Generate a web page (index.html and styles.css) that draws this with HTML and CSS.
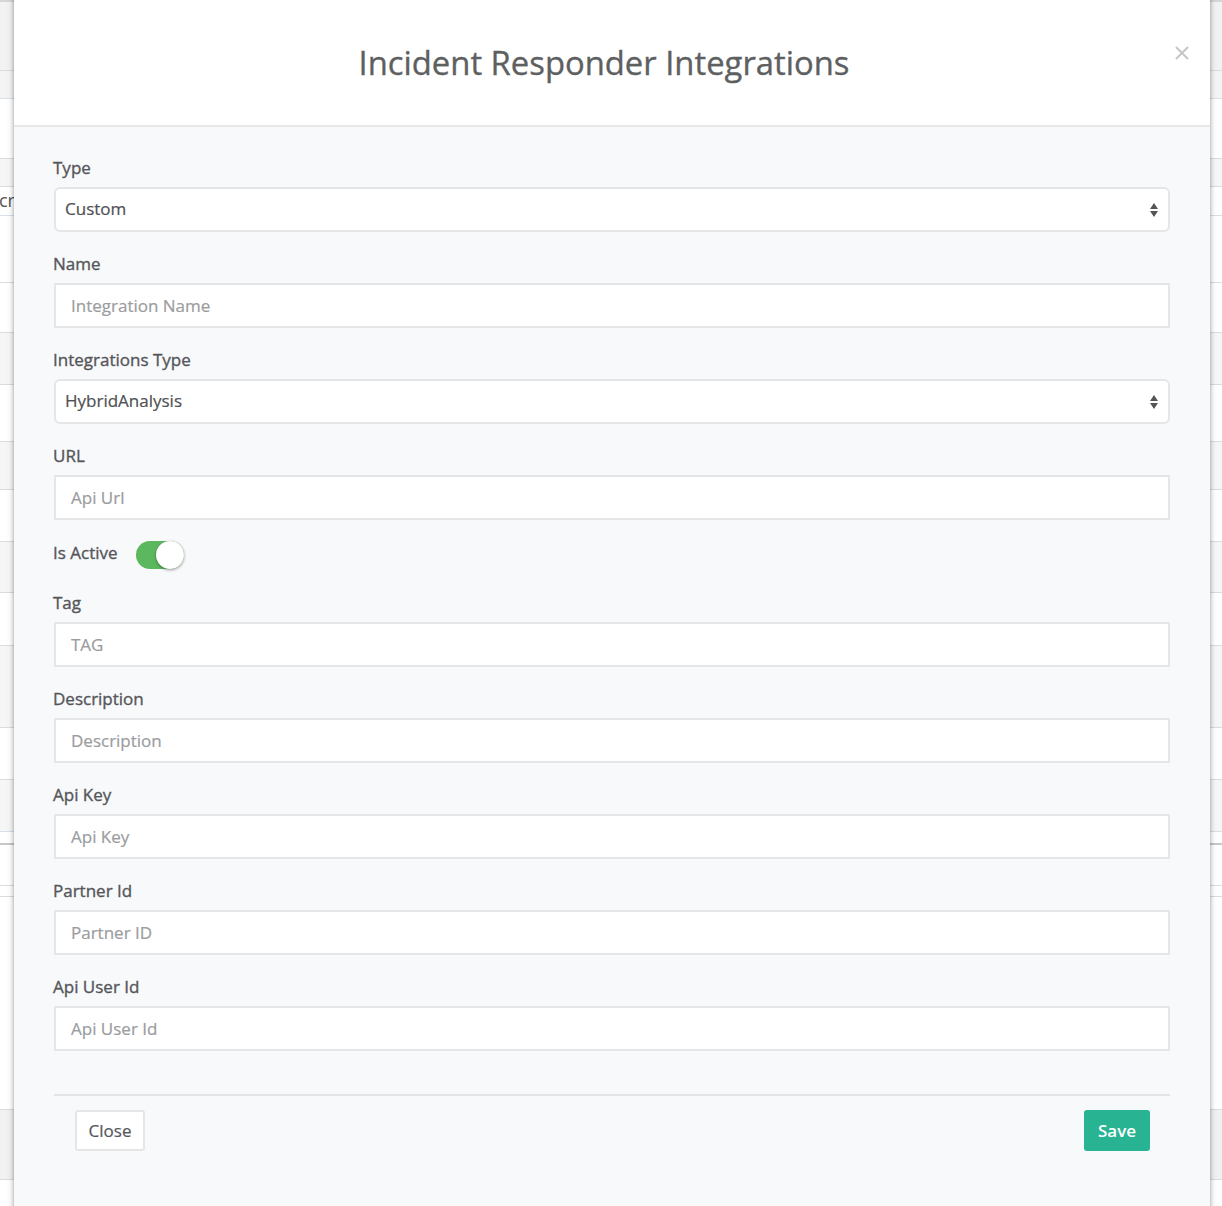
FILE: index.html
```html
<!DOCTYPE html>
<html>
<head>
<meta charset="utf-8">
<link rel="stylesheet" href="styles.css">
</head>
<body>
<div class="page">
  <div class="row r1"></div>
  <div class="row r2 blue"></div>
  <div class="row r3"></div>
  <div class="row r4 grey"></div>
  <div class="row r5 blue"><span class="bgtext">cription</span></div>
  <div class="row r6"></div>
  <div class="row r7"></div>
  <div class="row r8 grey"></div>
  <div class="row r9"></div>
  <div class="row r10 grey"></div>
  <div class="row r11"></div>
  <div class="row r12 grey"></div>
  <div class="row r13"></div>
  <div class="row r14 grey"></div>
  <div class="row r15"></div>
  <div class="row r16 grey blue"></div>
  <div class="row r17 dark"></div>
  <div class="row r18"></div>
  <div class="row r19"></div>
  <div class="row r20"></div>
  <div class="row r21 grey2"></div>
  <div class="row r22"></div>
</div>

<div class="modal">
  <div class="modal-header">
    <h1 class="modal-title">Incident Responder Integrations</h1>
    <span class="close-x">
      <svg width="14" height="14" viewBox="0 0 14 14"><path d="M1 1 L13 13 M13 1 L1 13" stroke="#c6c6c6" stroke-width="2" fill="none"/></svg>
    </span>
  </div>
  <div class="modal-body">
    <div class="group">
      <label class="lbl">Type</label>
      <div class="select">
        <span class="val">Custom</span>
        <svg class="arrows" width="8" height="16" viewBox="0 0 8 16"><path d="M4 1 L8 7 L0 7 Z M0 9 L8 9 L4 15 Z" fill="#555"/></svg>
      </div>
    </div>
    <div class="group">
      <label class="lbl">Name</label>
      <div class="input ph">Integration Name</div>
    </div>
    <div class="group">
      <label class="lbl">Integrations Type</label>
      <div class="select">
        <span class="val">HybridAnalysis</span>
        <svg class="arrows" width="8" height="16" viewBox="0 0 8 16"><path d="M4 1 L8 7 L0 7 Z M0 9 L8 9 L4 15 Z" fill="#555"/></svg>
      </div>
    </div>
    <div class="group">
      <label class="lbl">URL</label>
      <div class="input ph">Api Url</div>
    </div>
    <div class="toggle-row">
      <label class="lbl">Is Active</label>
      <span class="toggle"><span class="knob"></span></span>
    </div>
    <div class="group">
      <label class="lbl">Tag</label>
      <div class="input ph">TAG</div>
    </div>
    <div class="group">
      <label class="lbl">Description</label>
      <div class="input ph">Description</div>
    </div>
    <div class="group">
      <label class="lbl">Api Key</label>
      <div class="input ph">Api Key</div>
    </div>
    <div class="group">
      <label class="lbl">Partner Id</label>
      <div class="input ph">Partner ID</div>
    </div>
    <div class="group last">
      <label class="lbl">Api User Id</label>
      <div class="input ph">Api User Id</div>
    </div>
    <div class="footer">
      <button class="btn btn-close">Close</button>
      <button class="btn btn-save">Save</button>
    </div>
  </div>
</div>
</body>
</html>
```

FILE: styles.css
```css
html, body {
  margin: 0;
  padding: 0;
}
body {
  width: 1222px;
  height: 1206px;
  overflow: hidden;
  position: relative;
  background: #fff;
  font-family: "Open Sans", "Noto Sans", sans-serif;
}
.page {
  display: flex;
  flex-direction: column;
}
.row {
  border-bottom: 1px solid #dcdcdc;
  background: #fff;
  box-sizing: border-box;
  position: relative;
}
.row.grey { background: #f6f6f6; }
.row.grey2 { background: #f1f1f1; }
.row.blue { border-bottom-color: #d8e0e8; }
.row.dark { border-bottom: 2px solid #c8c8c8; }
.r1 { height: 71px; background: #f2f2f2; border-top: 2px solid #d6d6d6; }
.r2 { height: 28px; background: #f4f4f4; }
.r3 { height: 60px; }
.r4 { height: 28px; }
.r5 { height: 29px; }
.r6 { height: 67px; }
.r7 { height: 50px; }
.r8 { height: 52px; }
.r9 { height: 57px; }
.r10 { height: 48px; }
.r11 { height: 52px; }
.r12 { height: 51px; }
.r13 { height: 53px; }
.r14 { height: 82px; }
.r15 { height: 52px; }
.r16 { height: 52px; }
.r17 { height: 13px; }
.r18 { height: 41px; }
.r19 { height: 11px; }
.r20 { height: 213px; }
.r21 { height: 70px; }
.r22 { height: 40px; border-bottom: none; }
.bgtext {
  position: absolute;
  left: -1px;
  top: 1px;
  font-size: 18px;
  color: #555;
}

.modal {
  position: absolute;
  left: 14px;
  top: -6px;
  width: 1196px;
  height: 1240px;
  background: #f8f9fb;
  border-radius: 6px;
  box-shadow: 0 0 4px rgba(0,0,0,0.35), 0 0 10px rgba(0,0,0,0.12);
  display: flex;
  flex-direction: column;
}
.modal-header {
  height: 133px;
  flex: none;
  background: #fff;
  border-radius: 6px 6px 0 0;
  border-bottom: 2px solid #e6e7e9;
  box-sizing: border-box;
  display: flex;
  align-items: center;
  justify-content: center;
  padding-right: 16px;
  position: relative;
}
.modal-title {
  margin: 0;
  font-size: 32.8px;
  font-weight: 500;
  color: #5e5f61;
  -webkit-text-stroke: 0.35px #5e5f61;
  padding-top: 6px;
}
.close-x {
  position: absolute;
  right: 21px;
  top: 52px;
  display: flex;
}
.modal-body {
  padding: 30px 40px 0 40px;
  display: flex;
  flex-direction: column;
}
.group {
  display: flex;
  flex-direction: column;
  margin-bottom: 21px;
}
.group.last { margin-bottom: 43px; }
.lbl {
  font-size: 17px;
  line-height: 22px;
  font-weight: 500;
  color: #55565a;
  -webkit-text-stroke: 0.35px #55565a;
  margin-bottom: 8px;
  margin-left: -1px;
}
.select, .input {
  height: 45px;
  box-sizing: border-box;
  background: #fff;
  border: 2px solid #e5e6e8;
  display: flex;
  align-items: center;
  font-size: 17px;
  -webkit-text-stroke: 0.2px currentColor;
}
.select {
  border-radius: 6px;
  padding: 0 10px 3px 9px;
  justify-content: space-between;
  color: #4f5054;
}
.select .arrows {
  margin-top: 3px;
}
.input {
  border-radius: 1px;
  padding: 0 15px 1px;
}
.ph { color: #9b9c9e; }
.toggle-row {
  display: flex;
  align-items: center;
  height: 30px;
  margin-top: -1px;
  margin-bottom: 22px;
}
.toggle-row .lbl {
  margin-bottom: 0;
  margin-top: -5px;
}
.toggle {
  margin-left: 18px;
  width: 48px;
  height: 28px;
  border-radius: 14px;
  background: #5cb85f;
  position: relative;
}
.knob {
  position: absolute;
  right: 0;
  top: 0;
  width: 28px;
  height: 28px;
  border-radius: 50%;
  background: #fff;
  box-shadow: 0 1px 3px rgba(0,0,0,0.4);
}
.footer {
  border-top: 2px solid #e3e4e6;
  padding: 14px 20px 0 21px;
  display: flex;
  justify-content: space-between;
  align-items: flex-start;
}
.btn {
  height: 41px;
  font-family: inherit;
  font-size: 17px;
  border-radius: 3px;
  box-sizing: border-box;
  cursor: pointer;
}
.btn-close {
  width: 70px;
  background: #fff;
  border: 2px solid #e5e6e8;
  color: #55565a;
  -webkit-text-stroke: 0.2px #55565a;
}
.btn-save {
  width: 66px;
  background: #28b393;
  border: none;
  color: #fff;
  font-weight: 600;
}
```
